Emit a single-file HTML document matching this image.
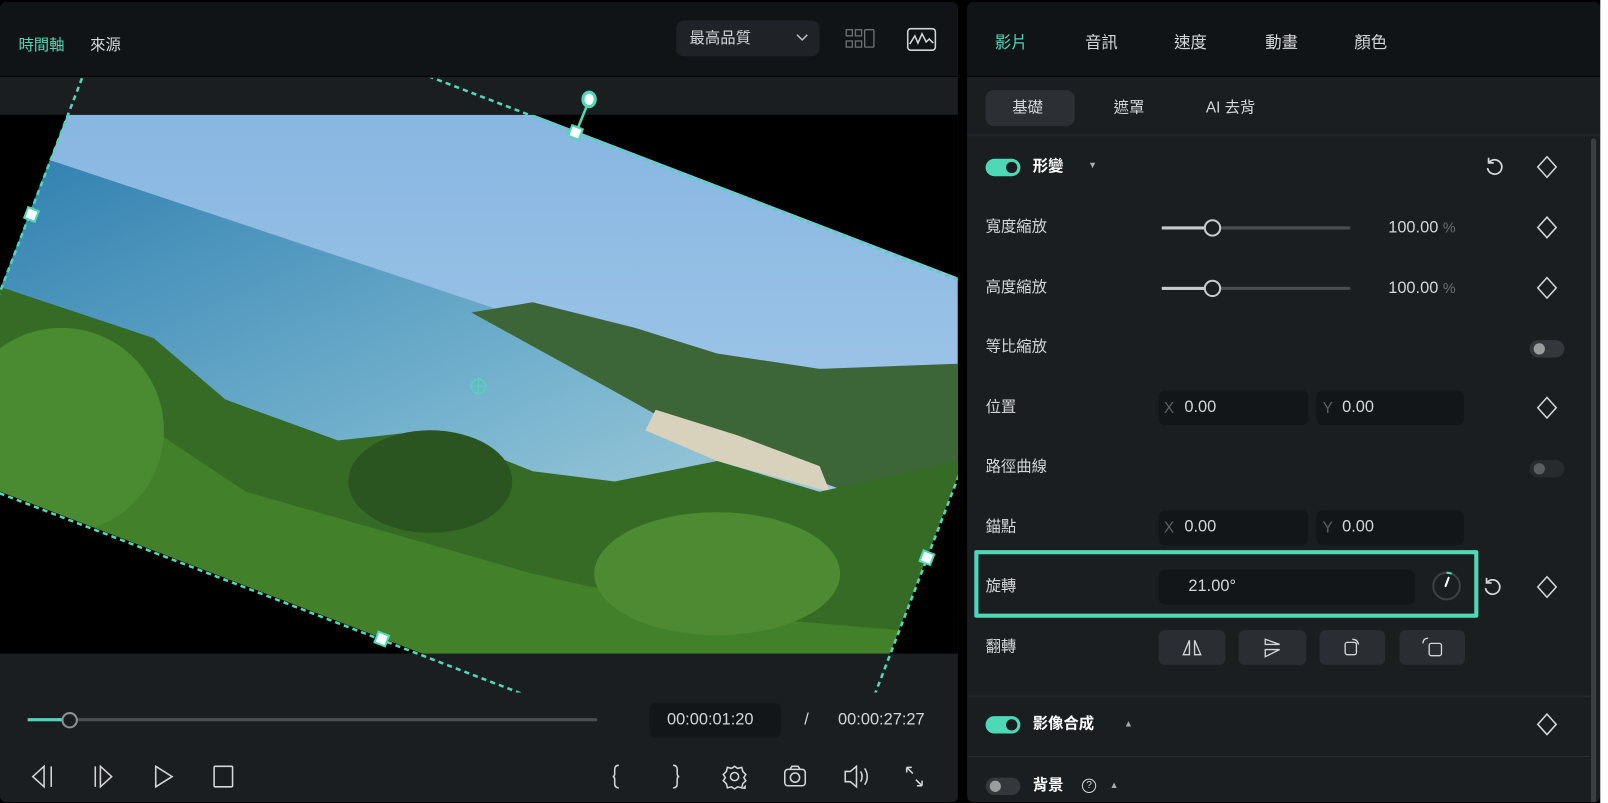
<!DOCTYPE html>
<html><head><meta charset="utf-8">
<style>
*{margin:0;padding:0;box-sizing:border-box}
html,body{width:1608px;height:803px;overflow:hidden;background:#fff}
#s{position:absolute;left:0;top:0;width:1570px;height:784px;transform:scale(1.0245);transform-origin:0 0;background:#000;font-family:"Liberation Sans","Noto Sans CJK TC",sans-serif;color:#d4d7da;font-size:15px}
#wr{position:absolute;left:1562px;top:0;width:10px;height:784px;background:#fff}
.a{position:absolute}
.t{position:absolute;white-space:nowrap;line-height:1}
.lp{left:0;top:2px;width:935px;height:781px;background:#1b1e21;border-radius:6px;overflow:hidden}
.rp{left:944px;top:2px;width:618px;height:781px;background:#1b1e21;border-radius:6px;overflow:hidden}
.hd{left:0;top:0;width:100%;height:73px;background:#111417;border-bottom:1px solid #000}
.tg{position:absolute;width:34px;height:17px;border-radius:9px}
.on{background:#4fd8b6}.on::after{content:"";position:absolute;right:3px;top:3px;width:11px;height:11px;border-radius:50%;background:#1b1e21}
.off{background:#34383c}.off::after{content:"";position:absolute;left:4px;top:3px;width:11px;height:11px;border-radius:50%;background:#9a9da0}
.inp{position:absolute;height:34px;background:#131619;border-radius:6px}
.btn{position:absolute;height:34px;top:613px;background:#2a2e33;border-radius:6px}
.lab{left:18px}
</style></head><body><div id="s">
<div class="a lp">
 <div class="a hd"></div>
 <div class="t" style="left:18px;top:35px;color:#4fd8b6">時間軸</div>
 <div class="t" style="left:88px;top:35px;color:#d4d7da">來源</div>
 <div class="a" style="left:660px;top:18px;width:140px;height:35px;background:#1f2327;border-radius:8px"></div>
 <div class="t" style="left:673px;top:28px;color:#d4d7da">最高品質</div>
 <svg class="a" style="left:776px;top:30px" width="14" height="10"><path d="M2 2l5 5 5-5" stroke="#bbb" stroke-width="1.5" fill="none"/></svg>
 <svg class="a" style="left:825px;top:26px" width="32" height="22" fill="none" stroke="#6b7075" stroke-width="1.3"><rect x="1" y="1" width="6" height="6"/><rect x="1" y="12" width="6" height="6"/><rect x="10" y="1" width="6" height="6"/><rect x="10" y="12" width="6" height="6"/><rect x="19" y="1" width="9" height="17" rx="1"/></svg>
 <svg class="a" style="left:885px;top:25px" width="30" height="24" fill="none" stroke="#d4d7da" stroke-width="1.5"><rect x="1" y="1" width="27" height="21" rx="3"/><path d="M3 16l5-8 3 7 4-9 4 8 3-3 4 4"/></svg>
 <div class="a" style="left:0;top:110px;width:935px;height:526px;background:#000;overflow:hidden">
  <svg width="935" height="526" viewBox="0 112 935 526">
   <defs><clipPath id="c"><rect x="-2" y="110" width="938" height="530" transform="rotate(21 467 375)"/></clipPath>
   <linearGradient id="sk" x1="0" y1="0" x2="0" y2="1"><stop offset="0" stop-color="#7fb1df"/><stop offset="1" stop-color="#b4d3ee"/></linearGradient>
   <linearGradient id="se" x1="0" y1="0" x2="1" y2="1"><stop offset="0" stop-color="#2f7fb0"/><stop offset=".6" stop-color="#73b1cd"/><stop offset="1" stop-color="#a8cfdc"/></linearGradient></defs>
   <g clip-path="url(#c)">
    <rect x="0" y="0" width="935" height="700" fill="url(#sk)"/>
    <polygon points="0,140 480,300 560,345 650,395 800,455 820,520 0,520" fill="url(#se)"/>
    <polygon points="460,305 520,295 620,320 700,345 800,360 935,355 935,520 800,470 650,410 560,360" fill="#3d6638"/>
    <polygon points="640,400 720,425 800,455 810,480 700,450 630,420" fill="#d8d2bd"/>
    <polygon points="220,405 330,440 340,470 230,440" fill="#d8d3c0"/>
    <polygon points="0,280 60,300 150,330 220,390 330,430 420,420 520,460 600,470 700,450 800,480 935,450 935,700 0,700" fill="#356b24"/>
    <polygon points="0,360 120,400 240,480 380,520 520,560 700,600 935,620 935,700 0,700" fill="#42802a"/>
    <ellipse cx="60" cy="420" rx="100" ry="100" fill="#4a8a30"/>
    <ellipse cx="420" cy="470" rx="80" ry="50" fill="#2a5520"/>
    <ellipse cx="700" cy="560" rx="120" ry="60" fill="#4d8a32"/>
   </g>
  </svg>
 </div>
 <svg class="a" style="left:0;top:74px" width="935" height="600" viewBox="0 74 935 600">
  <rect x="-2" y="110" width="938" height="530" transform="rotate(21 467 375)" fill="none" stroke="#4fd8b6" stroke-width="2.5" stroke-dasharray="5 4"/>
  <line x1="562" y1="128" x2="575" y2="96" stroke="#4fd8b6" stroke-width="2.5"/>
  <ellipse cx="575" cy="95" rx="6" ry="7" fill="#fff" stroke="#4fd8b6" stroke-width="3"/>
  <g fill="#fff" stroke="#4fd8b6" stroke-width="2">
   <rect x="556" y="122" width="11" height="11" transform="rotate(21 562 128)"/>
   <rect x="25" y="202" width="11" height="11" transform="rotate(21 31 208)"/>
   <rect x="367" y="616" width="11" height="11" transform="rotate(21 372 622)"/>
   <rect x="899" y="537" width="11" height="11" transform="rotate(21 905 543)"/>
  </g>
  <circle cx="467" cy="375" r="7" fill="none" stroke="#4fd8b6" stroke-width="1.3"/>
  <path d="M467 366v18M458 375h18" stroke="#4fd8b6" stroke-width="1"/>
 </svg>
 <div class="a" style="left:27px;top:699px;width:556px;height:3px;background:#4a4e53;border-radius:2px"></div>
 <div class="a" style="left:27px;top:699px;width:41px;height:3px;background:#4fd8b6"></div>
 <div class="a" style="left:60px;top:693px;width:16px;height:16px;border-radius:50%;border:2.5px solid #8d9196;background:#1b1e21"></div>
 <div class="a" style="left:634px;top:684px;width:128px;height:34px;background:#131619;border-radius:6px"></div>
 <div class="t" style="left:651px;top:693px;font-size:16px">00:00:01:20</div>
 <div class="t" style="left:785px;top:693px;font-size:16px">/</div>
 <div class="t" style="left:818px;top:693px;font-size:16px">00:00:27:27</div>
 <svg class="a" style="left:0;top:738px" width="935" height="36" fill="none" stroke="#d4d7da" stroke-width="1.5">
  <path d="M43 8L32 18l11 10zM50 8v20"/>
  <path d="M93 8v20M98 8l11 10-11 10z"/>
  <path d="M152 8l16 10-16 10z"/>
  <rect x="209" y="8" width="18" height="20" rx="1"/>
  <path d="M604 7q-4 0-4 4v4q0 3-2 3 2 0 2 3v4q0 4 4 4"/>
  <path d="M657 7q4 0 4 4v4q0 3 2 3-2 0-2 3v4q0 4-4 4"/>
  <circle cx="717" cy="18" r="4"/><path d="M717 8l3 2 4-1 1 4 3 3-2 3 2 3-3 3-1 4-4-1-3 2-3-2-4 1-1-4-3-3 2-3-2-3 3-3 1-4 4 1z"/>
  <rect x="766" y="11" width="20" height="16" rx="3"/><circle cx="776" cy="19" r="4.5"/><path d="M771 11l2-3h6l2 3"/>
  <path d="M825 13h5l6-5v20l-6-5h-5zM840 13q3 5 0 10M844 10q5 8 0 16"/>
  <path d="M885 9l6 6M885 9v5M885 9h5M900 27l-6-6M900 27v-5M900 27h-5"/>
 </svg>
 <div class="a" style="left:724px;top:764px;width:0;height:0;border-left:4px solid transparent;border-bottom:4px solid #d4d7da"></div>
</div>

<div class="a rp">
 <div class="a hd"></div>
 <div class="t" style="left:27px;top:33px;font-size:16px;color:#4fd8b6">影片</div>
 <div class="t" style="left:115px;top:33px;font-size:16px">音訊</div>
 <div class="t" style="left:202px;top:33px;font-size:16px">速度</div>
 <div class="t" style="left:291px;top:33px;font-size:16px">動畫</div>
 <div class="t" style="left:378px;top:33px;font-size:16px">顏色</div>
 <div class="a" style="left:0;top:129px;width:618px;height:2px;background:#22262a"></div>
 <div class="a" style="left:18px;top:86px;width:87px;height:35px;background:#2c3035;border-radius:8px"></div>
 <div class="t" style="left:44px;top:96px">基礎</div>
 <div class="t" style="left:143px;top:96px">遮罩</div>
 <div class="t" style="left:233px;top:96px">AI 去背</div>
 <div class="a" style="left:609px;top:133px;width:5px;height:660px;background:#3a3f44;border-radius:3px"></div>

 <div class="tg on" style="left:18px;top:153px"></div>
 <div class="t" style="left:64px;top:153px;font-weight:bold;color:#fff">形變</div>
 <div class="t" style="left:118px;top:155px;font-size:9px;color:#aaa">▼</div>
 <svg class="a" style="left:504px;top:150px" width="22" height="22" fill="none" stroke="#d4d7da" stroke-width="1.7"><path d="M6 6A7 7 0 1 1 4 12"/><path d="M5 2v5h5"/></svg>
 <svg class="a" style="left:555px;top:149px" width="22" height="24"><path d="M11 2L20 12 11 22 2 12z" fill="none" stroke="#d4d7da" stroke-width="1.5"/></svg>

 <div class="t lab" style="top:212px">寬度縮放</div>
 <div class="a" style="left:190px;top:219px;width:184px;height:3px;background:#4a4e53"></div>
 <div class="a" style="left:190px;top:219px;width:49px;height:3px;background:#c8cbce"></div>
 <div class="a" style="left:231px;top:212px;width:17px;height:17px;border-radius:50%;border:2.5px solid #c8cbce;background:#1b1e21"></div>
 <div class="t" style="left:411px;top:213px;font-size:16px">100.00 <span style="color:#6a6e73;font-size:14px">%</span></div>
 <svg class="a" style="left:555px;top:208px" width="22" height="24"><path d="M11 2L20 12 11 22 2 12z" fill="none" stroke="#d4d7da" stroke-width="1.5"/></svg>

 <div class="t lab" style="top:271px">高度縮放</div>
 <div class="a" style="left:190px;top:278px;width:184px;height:3px;background:#4a4e53"></div>
 <div class="a" style="left:190px;top:278px;width:49px;height:3px;background:#c8cbce"></div>
 <div class="a" style="left:231px;top:271px;width:17px;height:17px;border-radius:50%;border:2.5px solid #c8cbce;background:#1b1e21"></div>
 <div class="t" style="left:411px;top:272px;font-size:16px">100.00 <span style="color:#6a6e73;font-size:14px">%</span></div>
 <svg class="a" style="left:555px;top:267px" width="22" height="24"><path d="M11 2L20 12 11 22 2 12z" fill="none" stroke="#d4d7da" stroke-width="1.5"/></svg>

 <div class="t lab" style="top:329px">等比縮放</div>
 <div class="tg off" style="left:549px;top:330px"></div>

 <div class="t lab" style="top:388px">位置</div>
 <div class="inp" style="left:187px;top:379px;width:146px"></div>
 <div class="t" style="left:192px;top:389px;color:#5c6065">X</div><div class="t" style="left:212px;top:388px;font-size:16px">0.00</div>
 <div class="inp" style="left:341px;top:379px;width:144px"></div>
 <div class="t" style="left:347px;top:389px;color:#5c6065">Y</div><div class="t" style="left:366px;top:388px;font-size:16px">0.00</div>
 <svg class="a" style="left:555px;top:384px" width="22" height="24"><path d="M11 2L20 12 11 22 2 12z" fill="none" stroke="#d4d7da" stroke-width="1.5"/></svg>

 <div class="t lab" style="top:446px">路徑曲線</div>
 <div class="tg off" style="left:549px;top:447px;opacity:.5"></div>

 <div class="t lab" style="top:505px">錨點</div>
 <div class="inp" style="left:187px;top:496px;width:146px"></div>
 <div class="t" style="left:192px;top:506px;color:#5c6065">X</div><div class="t" style="left:212px;top:505px;font-size:16px">0.00</div>
 <div class="inp" style="left:341px;top:496px;width:144px"></div>
 <div class="t" style="left:347px;top:506px;color:#5c6065">Y</div><div class="t" style="left:366px;top:505px;font-size:16px">0.00</div>

 <div class="a" style="left:7px;top:535px;width:492px;height:66px;border:4px solid #4fd8b6;border-radius:2px"></div>
 <div class="t lab" style="top:563px">旋轉</div>
 <div class="inp" style="left:187px;top:554px;width:250px"></div>
 <div class="t" style="left:216px;top:563px;font-size:16px">21.00°</div>
 <svg class="a" style="left:452px;top:554px" width="32" height="32" fill="none"><circle cx="16" cy="16" r="13" stroke="#3c4146" stroke-width="2"/><path d="M16 3A13 13 0 0 1 21 4" stroke="#4fd8b6" stroke-width="2"/><path d="M18 8l-3 8" stroke="#fff" stroke-width="2" stroke-linecap="round"/></svg>
 <svg class="a" style="left:502px;top:560px" width="22" height="22" fill="none" stroke="#d4d7da" stroke-width="1.7"><path d="M6 6A7 7 0 1 1 4 12"/><path d="M5 2v5h5"/></svg>
 <svg class="a" style="left:555px;top:559px" width="22" height="24"><path d="M11 2L20 12 11 22 2 12z" fill="none" stroke="#d4d7da" stroke-width="1.5"/></svg>

 <div class="t lab" style="top:622px">翻轉</div>
 <div class="btn" style="left:187px;width:65px"></div>
 <div class="btn" style="left:265px;width:66px"></div>
 <div class="btn" style="left:344px;width:64px"></div>
 <div class="btn" style="left:422px;width:64px"></div>
 <svg class="a" style="left:187px;top:613px" width="300" height="34" fill="none" stroke="#d4d7da" stroke-width="1.3">
  <path d="M30 10l-6 14h6zM35 10l6 14h-6z"/>
  <path d="M104 9l14 5h-14zM104 19l14 0-14 7z"/>
  <rect x="182" y="12" width="11" height="12" rx="2"/><path d="M189 9q5 0 6 5"/>
  <rect x="264" y="13" width="12" height="12" rx="2"/><path d="M258 13q0-5 5-5"/>
 </svg>

 <div class="a" style="left:0;top:677px;width:608px;height:1px;background:#2a2e32"></div>
 <div class="tg on" style="left:18px;top:697px"></div>
 <div class="t" style="left:64px;top:697px;font-weight:bold;color:#fff">影像合成</div>
 <div class="t" style="left:153px;top:700px;font-size:9px;color:#aaa">▲</div>
 <svg class="a" style="left:555px;top:693px" width="22" height="24"><path d="M11 2L20 12 11 22 2 12z" fill="none" stroke="#d4d7da" stroke-width="1.5"/></svg>
 <div class="a" style="left:0;top:736px;width:608px;height:1px;background:#2a2e32"></div>
 <div class="tg off" style="left:18px;top:757px"></div>
 <div class="t" style="left:64px;top:757px;font-weight:bold;color:#fff">背景</div>
 <div class="a" style="left:112px;top:758px;width:14px;height:14px;border:1.3px solid #d4d7da;border-radius:50%;font-size:10px;text-align:center;line-height:12px;color:#d4d7da">?</div>
 <div class="t" style="left:139px;top:760px;font-size:9px;color:#aaa">▲</div>
</div>
<div id="wr"></div>
</div></body></html>
